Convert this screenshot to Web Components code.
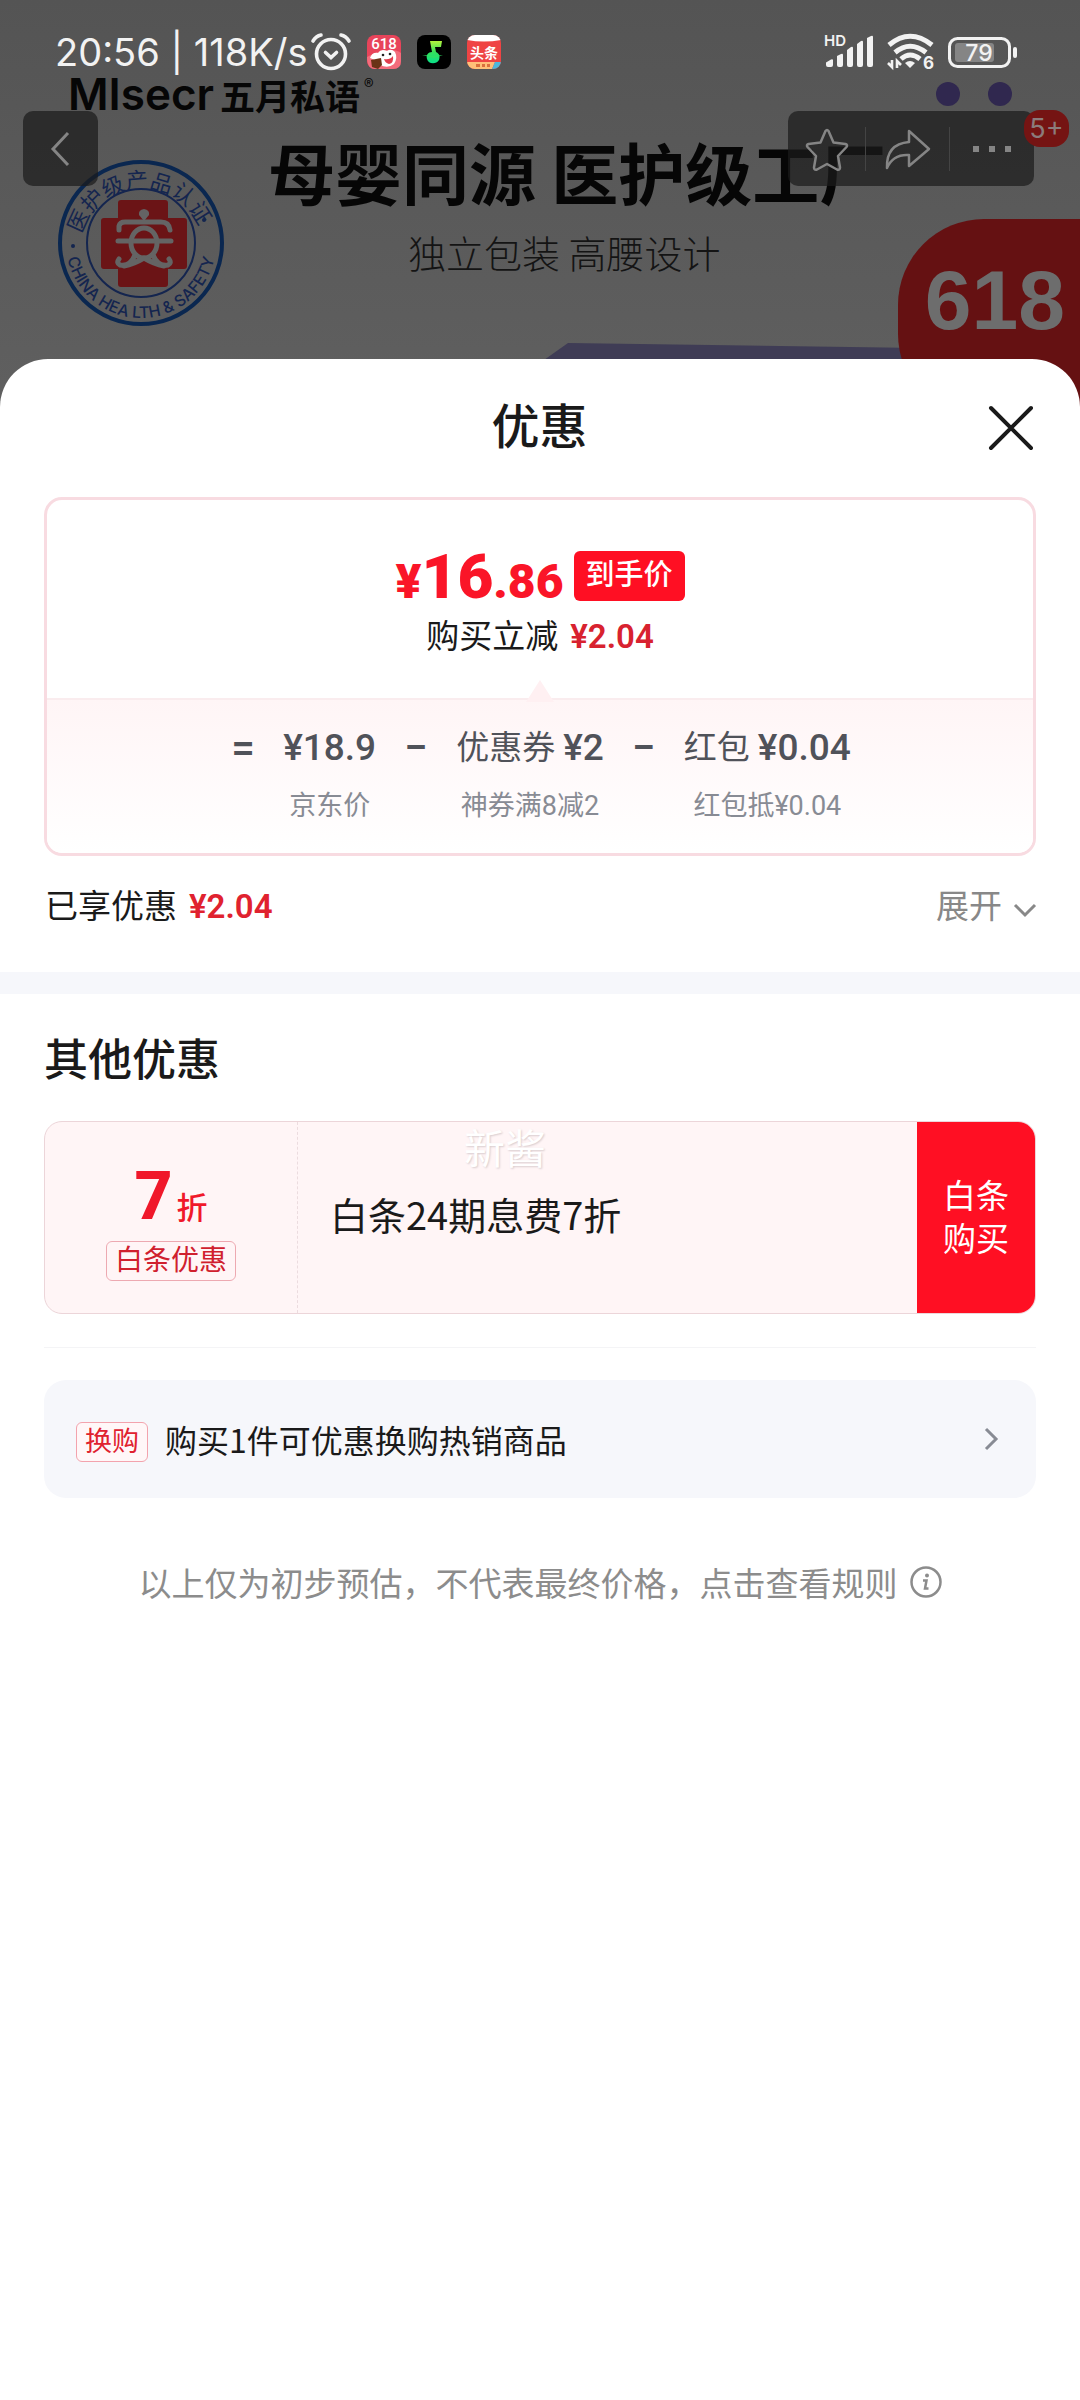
<!DOCTYPE html>
<html lang="zh-CN">
<head>
<meta charset="UTF-8">
<meta name="viewport" content="width=device-width, initial-scale=1">
<title>优惠</title>
<style>
body{
    margin: 0;
    background: #fff;
    color: #1a1a1a;
    font-family: Roboto, "Noto Sans CJK SC", sans-serif;
}
</style>
</head>
<body>
<discount-page></discount-page>

<script>
const base = `
*{ box-sizing: border-box; }
:host{ display: block; }
button{
    margin: 0;
    padding: 0;
    border: 0;
    background: none;
    color: inherit;
    font: inherit;
}
svg{ display: block; flex: none; overflow: visible; }
`

// small helper: every element only fills its open shadow root
class BaseElement extends HTMLElement{
    constructor(){
        super()
        this.attachShadow({mode: 'open'})
    }
    connectedCallback(){
        this.shadowRoot.innerHTML = `<style>${base}${this.css()}</style>${this.html()}`
    }
    css(){ return '' }
    html(){ return '<slot></slot>' }
}

class StatusBar extends BaseElement{
    css(){ return `
:host{
    display: flex;
    align-items: center;
    justify-content: space-between;
    height: 64px;
    padding: 0 62px 0 55px;
    color: #f2f2f2;
    font-family: Inter, Roboto, sans-serif;
}
.side{ display: flex; align-items: center; gap: 16px; }
.left{ font-size: 38px; line-height: 48px; }
.clock{ display: flex; align-items: center; gap: 4px; white-space: nowrap; }
.right{ gap: 13px; }
` }
    html(){ return `
<div class="side left">
    <div class="clock"><span>20:56 | 118K/s</span>
        <svg width="40" height="40" viewBox="0 0 40 40" fill="none" stroke="#f2f2f2" stroke-width="3.6" stroke-linecap="round">
            <circle cx="20" cy="22" r="14.5"/><path d="M2 9Q5 4 10 3M38 9Q35 4 30 3M14.5 20.5l5.500 5 5.500-5"/>
        </svg>
    </div>
    <svg width="34" height="34" viewBox="0 0 34 34">
        <rect width="34" height="34" rx="8" fill="#e8445a"/>
        <path d="M0 22Q0 34 8 34h18q8 0 8-8l0-8Q22 10 0 22z" fill="#f36c7c"/>
        <text x="17" y="14" text-anchor="middle" font-family="Roboto" font-size="15" font-weight="500" fill="#fff">618</text>
        <path d="M3 23q2-6 8-5 3-5 9-2 4-3 8 1 3 6-1 12-6 5-14 1-2-4-10-7z" fill="#fff"/>
        <path d="M17 24q6 1 9-3 1 7-4 8-4-1-5-5z" fill="#e23d4e"/>
        <circle cx="16" cy="20" r="1.3" fill="#222"/><circle cx="23" cy="19" r="1.3" fill="#222"/>
        <path d="M4 25l10-2 1 7-4 4-6-2z" fill="#6b3317"/>
    </svg>
    <svg width="34" height="34" viewBox="0 0 34 34">
        <defs><linearGradient id="note" x1="0" y1="0" x2="0" y2="1"><stop offset="0" stop-color="#b5f23d"/><stop offset=".5" stop-color="#35e05c"/><stop offset="1" stop-color="#0ae089"/></linearGradient></defs>
        <rect width="34" height="34" rx="8" fill="#000"/>
        <path d="M13 6h12l-1 6h-6l1 5c4 2 4 5 3 8-3 5-11 4-12-1-1-4 1-7 5-7z" fill="url(#note)"/>
        <path d="M5 20l12 1 9-1-9 3z" fill="#2fe064"/>
    </svg>
    <svg width="34" height="34" viewBox="0 0 34 34">
        <defs><clipPath id="app"><rect width="34" height="34" rx="8"/></clipPath></defs>
        <g clip-path="url(#app)">
            <path d="M0 0h34v34H0z" fill="#ef4444"/><path d="M0 0h34v5q-17 3-34 0z" fill="#fff"/>
            <path d="M0 27h28l-3 7H0z" fill="#ffc078"/><path d="M28 27h6v7h-9z" fill="#4db8dc"/>
            <path d="M9 29h4v3H9zM15 29h3v3h-3zM20 29h3v3h-3z" fill="#d9703d"/>
        </g>
        <text x="17" y="23" text-anchor="middle" font-family="Noto Sans CJK SC" font-size="14" font-weight="700" fill="#fff">头条</text>
    </svg>
</div>
<div class="side right">
    <svg width="50" height="36" viewBox="0 0 50 36" fill="#f2f2f2">
        <text x="0" y="12" font-family="Inter" font-size="15" font-weight="600">HD</text>
        <path d="M2 28.500l5-3q2-1 2 1V31q0 2-2 2H4q-2 0-2-2zM13 22l4-2q2-1 2 1v10q0 2-2 2h-2q-2 0-2-2zM23 16l4-3q2-1 2 1v17q0 2-2 2h-2q-2 0-2-2zM33 10l4-3q2-1 2 1v23q0 2-2 2h-2q-2 0-2-2zM43 4l4-2q2-1 2 1v28q0 2-2 2h-2q-2 0-2-2z"/>
    </svg>
    <svg width="48" height="36" viewBox="0 0 48 36" fill="none" stroke="#f2f2f2">
        <g stroke-width="5"><path d="M2 11Q23-6.500 45 11"/><path d="M8 18.500Q23 6 39 18.500"/><path d="M14 25Q23 17 33 25"/></g>
        <path d="M18 29q5-4 10 0l-5 5z" fill="#f2f2f2" stroke="none"/>
        <path d="M5 26v7l-4-4M10 34v-7l4 4" stroke-width="2.600"/>
        <text x="36" y="35" font-family="Inter" font-size="17" font-weight="700" fill="#f2f2f2" stroke="none">6</text>
    </svg>
    <svg width="70" height="32" viewBox="0 0 70 32">
        <rect x="1.500" y="2.500" width="60" height="28" rx="8" fill="none" stroke="#f2f2f2" stroke-width="3"/>
        <rect x="7" y="7" width="39" height="19" rx="3" fill="#858585"/>
        <rect x="65" y="11" width="4" height="11" rx="2" fill="#f2f2f2"/>
        <text x="31" y="25" text-anchor="middle" font-family="Inter" font-size="23" font-weight="500" fill="#f2f2f2">79</text>
    </svg>
</div>
` }
}

// round certification stamp on the product photo
class SafetySeal extends BaseElement{
    html(){ return `
<svg width="168" height="168" viewBox="0 0 168 168">
    <circle cx="84" cy="84" r="81" fill="none" stroke="#0a2750" stroke-width="4"/>
    <circle cx="84" cy="84" r="54" fill="none" stroke="#14254f" stroke-width="2"/>
    <path d="M61 44q0-3 3-3h44q3 0 3 3v15h16q3 0 3 3v45q0 3-3 3h-16v15q0 3-3 3H64q-3 0-3-3v-15H47q-3 0-3-3V62q0-3 3-3h14z" fill="#6b1416"/>
    <g fill="none" stroke="#646464" stroke-width="5" stroke-linecap="round" stroke-linejoin="round">
        <path d="M62 71V67q1-4 6-4h36q8 0 9 8M61 82h53"/>
        <ellipse cx="87" cy="84" rx="13" ry="15"/>
        <path d="M78 96q-5 12-15 10-4-2-1-6M96 96q5 12 15 10 4-2 1-6M67 107q10-2 20-8 10 6 20 8"/>
    </g>
    <path d="M87 62l-5-6q-1-5 5-6 6 1 5 6z" fill="#646464"/>
    <defs><path id="top" d="M23 88a61.500 61.500 0 0 1 122-8"/><path id="bottom" d="M9 84a75 75 0 0 0 150 0"/></defs>
    <g fill="#14254f" text-anchor="middle">
        <text font-family="Noto Sans CJK SC" font-size="22"><textPath href="#top" startOffset="50%">医护级产品认证</textPath></text>
        <text font-family="Inter" font-size="16" font-weight="500"><textPath href="#bottom" startOffset="50%">CHINA HEA LTH &amp; SAFETY</textPath></text>
    </g>
    <circle cx="16" cy="87" r="2" fill="#14254f"/><circle cx="147" cy="61" r="2" fill="#14254f"/>
</svg>
` }
}

// dimmed product page behind the sheet
class ProductHero extends BaseElement{
    css(){ return `
:host{
    position: relative;
    height: 420px;
    overflow: hidden;
    background: linear-gradient(#545454, #606060);
    color: #060606;
    font-family: "Noto Sans CJK SC", sans-serif;
}
status-bar{ position: absolute; top: 20px; left: 0; right: 0; z-index: 3; }
.brand{
    position: absolute;
    top: 70px;
    left: 68px;
    display: flex;
    align-items: center;
    height: 48px;
    font-size: 35px;
    font-weight: 700;
}
.brand b{ font: 600 44px/48px Inter, sans-serif; margin-right: 6px; }
.brand sup{ font-size: 20px; line-height: 20px; align-self: flex-start; margin: 6px 0 0 4px; font-weight: 400; }
.slogan{
    position: absolute;
    top: 131px;
    left: 268px;
    white-space: nowrap;
    margin: 0;
    font-size: 67px;
    line-height: 80px;
    font-weight: 700;
}
.sub{
    position: absolute;
    top: 228px;
    left: 408px;
    white-space: nowrap;
    margin: 0;
    font-size: 38px;
    line-height: 48px;
    font-weight: 300;
    color: #141414;
}
safety-seal{ position: absolute; top: 159px; left: 57px; }
.art{ position: absolute; top: 340px; left: 540px; }
.dots{ position: absolute; top: 82px; right: 68px; display: flex; gap: 28px; }
.dots i{ width: 24px; height: 24px; border-radius: 12px; background: #30284f; }
.promo{
    position: absolute;
    top: 219px;
    right: 0;
    width: 182px;
    height: 201px;
    padding: 26px 15px 0 0;
    border-radius: 86px 0 0 86px;
    background: #651112;
    color: #6d6d6d;
    font: 700 84px/110px "Liberation Sans", sans-serif;
    text-align: right;
}
.back, .tools{
    position: absolute;
    top: 111px;
    height: 75px;
    border-radius: 10px;
    background: rgba(28, 28, 28, .72);
    display: flex;
    align-items: center;
}
.back{ left: 23px; width: 75px; justify-content: center; }
.tools{ right: 46px; width: 246px; display: grid; grid-template-columns: 77px 84px 1fr; }
.tools button{ height: 44px; display: flex; align-items: center; justify-content: center; }
.tools button + button{ border-left: 1px solid #444; }
.count{
    position: absolute;
    top: 110px;
    right: 11px;
    width: 45px;
    height: 37px;
    border-radius: 16px;
    background: #751413;
    color: #8b7c7c;
    font: 27px/37px Inter, sans-serif;
    text-align: center;
}
` }
    html(){ return `
<status-bar></status-bar>
<div class="brand"><b>MIsecr</b>五月私语<sup>®</sup></div>
<h2 class="slogan">母婴同源 医护级工厂</h2>
<p class="sub">独立包装 高腰设计</p>
<safety-seal></safety-seal>
<svg class="art" width="400" height="40" viewBox="0 0 400 40"><path d="M4 20L28 3l352 5v32H0z" fill="#3f3c55"/></svg>
<div class="dots"><i></i><i></i></div>
<div class="promo">618</div>
<button class="back" aria-label="返回"><svg width="24" height="36" viewBox="0 0 24 36" fill="none" stroke="#858585" stroke-width="3"><path d="M19 2L4 18l15 16"/></svg></button>
<div class="tools">
    <button aria-label="收藏"><svg width="44" height="44" viewBox="0 0 44 44" fill="none" stroke="#858585" stroke-width="2.500" stroke-linejoin="round"><path d="M20.500 4q1.500-2 3 0l5 11.500 12 1.500q2.500 1 1 3l-8.500 9 2 11.500q0 3-3 2L22 37l-10 5.500q-3 1-3-2L11 29l-8.500-9q-1.500-2 1-3l12-1.500z"/></svg></button>
    <button aria-label="分享"><svg width="46" height="44" viewBox="0 0 46 44" fill="none" stroke="#858585" stroke-width="2.500" stroke-linejoin="round"><path d="M24 4l20 18-20 17V28Q8 27 2 41 1 17 24 15z"/></svg></button>
    <button aria-label="更多"><svg width="40" height="8" viewBox="0 0 40 8" fill="#858585"><path d="M1 1h6v6H1zM17 1h6v6h-6zM33 1h6v6h-6z"/></svg></button>
</div>
<div class="count">5+</div>
` }
}

class SheetHeader extends BaseElement{
    css(){ return `
:host{
    display: grid;
    grid-template-columns: 1fr auto 1fr;
    align-items: center;
    height: 138px;
    padding: 0 46px 0 45px;
}
h1{ grid-column: 2; margin: 0; font-size: 48px; line-height: 64px; font-weight: 500; }
button{ justify-self: end; }
` }
    html(){ return `
<h1><slot></slot></h1>
<button aria-label="关闭"><svg width="46" height="46" viewBox="0 0 46 46" stroke="#1a1a1a" stroke-width="4" stroke-linecap="round"><path d="M3 3l40 40M43 3L3 43"/></svg></button>
` }
}

class PriceCard extends BaseElement{
    css(){ return `
:host{
    margin: 0 44px;
    border: 3px solid #f8dbe1;
    border-radius: 18px;
    overflow: hidden;
}
.final{
    display: flex;
    flex-direction: column;
    align-items: center;
    gap: 4px;
    height: 198px;
    padding-top: 51px;
}
.price{ display: flex; align-items: flex-end; gap: 10px; height: 50px; color: #fa1528; font-weight: 700; }
.price b{ font-size: 48px; line-height: 38px; white-space: nowrap; }
.price big{ font-size: 62px; }
.tag{
    height: 50px;
    padding: 0 12px;
    border-radius: 6px;
    background: #ff0f23;
    color: #fff;
    font-size: 29px;
    line-height: 49px;
    font-weight: 500;
}
.off{ display: flex; align-items: center; gap: 12px; font-size: 33px; line-height: 64px; }
.off b{ color: #d8222f; font-weight: 600; }
.detail{
    position: relative;
    height: 155px;
    border-top: 2px solid #faecee;
    background: linear-gradient(#fff5f6, #fff);
    display: flex;
    justify-content: center;
    gap: 28px;
    padding: 20px 0 0 2px;
}
.caret{ position: absolute; top: -20px; left: calc(50% - 14px); }
` }
    html(){ return `
<div class="final">
    <div class="price"><b>¥<big>16</big>.86</b><span class="tag">到手价</span></div>
    <div class="off">购买立减 <b>¥2.04</b></div>
</div>
<div class="detail">
    <svg class="caret" width="28" height="22" viewBox="0 0 28 22"><path d="M0 22L14 0l14 22z" fill="#fff0f2"/></svg>
    <slot></slot>
</div>
` }
}

class PriceTerm extends BaseElement{
    css(){ return `
:host{ display: flex; gap: 28px; }
.sign{ font-size: 42px; line-height: 56px; color: #505259; font-weight: 500; width: 24px; text-align: center; }
.term{ display: flex; flex-direction: column; align-items: center; gap: 2px; }
.top{ display: flex; gap: 8px; color: #505259; font-size: 33px; line-height: 56px; }
.top b{ font-size: 37px; font-weight: 500; }
.note{ color: #888b94; font-size: 27px; line-height: 56px; }
` }
    html(){
        const label = this.getAttribute("label")
        return `
<span class="sign">${this.getAttribute("sign")}</span>
<div class="term">
    <div class="top">${label ? `<span>${label}</span>` : ''}<b>${this.getAttribute("amount")}</b></div>
    <div class="note"><slot></slot></div>
</div>
` }
}

class SavedRow extends BaseElement{
    css(){ return `
:host{
    display: flex;
    align-items: center;
    justify-content: space-between;
    height: 116px;
    padding: 0 44px 14px 45px;
    font-size: 33px;
    line-height: 48px;
}
div, button{ display: flex; align-items: center; gap: 12px; }
b{ color: #e0222f; font-weight: 600; }
button{ color: #888; }
svg{ margin-top: 6px; }
` }
    html(){ return `
<div><slot></slot><b>${this.getAttribute("amount")}</b></div>
<button>展开<svg width="22" height="14" viewBox="0 0 22 14" fill="none" stroke="#888" stroke-width="3"><path d="M1 2l10 10L21 2"/></svg></button>
` }
}

class CouponCard extends BaseElement{
    css(){ return `
:host{
    position: relative;
    display: flex;
    height: 193px;
    margin: 0 44px;
    border: 1px solid #ecd5d9;
    border-radius: 18px;
    background: #fff5f6;
    overflow: hidden;
}
.rate{
    width: 253px;
    display: flex;
    flex-direction: column;
    align-items: center;
    padding-top: 41px;
    border-right: 1px dashed #ecdcdf;
    color: #f0182a;
}
.num{ display: flex; align-items: baseline; gap: 4px; font-size: 31px; font-weight: 500; line-height: 68px; height: 78px; }
.num b{ font-size: 66px; font-weight: 800; }
.tag{
    height: 40px;
    padding: 0 8px;
    border: 1px solid #eda9b1;
    border-radius: 6px;
    color: #d0202e;
    font-size: 28px;
    line-height: 37px;
}
.name{
    flex: 1;
    display: flex;
    align-items: center;
    padding: 0 0 8px 32px;
    font-family: "Noto Sans CJK SC", sans-serif;
    font-size: 38px;
}
.buy{ width: 118px; background: #ff0f23; color: #fff; font-size: 33px; line-height: 43px; padding: 0 25px; }
.float{
    position: absolute;
    top: 0;
    left: 419px;
    color: #fff;
    font-size: 41px;
    line-height: 56px;
    text-shadow: 1px 1px 2px #d9cdcf;
}
` }
    html(){ return `
<div class="rate">
    <div class="num"><b>7</b>折</div>
    <span class="tag">白条优惠</span>
</div>
<div class="name"><slot></slot></div>
<button class="buy">白条购买</button>
<span class="float">新酱</span>
` }
}

class SwapBar extends BaseElement{
    css(){ return `
:host{ margin: 0 44px; }
button{
    display: flex;
    align-items: center;
    gap: 17px;
    width: 100%;
    height: 118px;
    padding: 0 38px 0 32px;
    border-radius: 22px;
    background: #f6f7fb;
    font-size: 32px;
    text-align: left;
}
.tag{
    height: 40px;
    margin-top: 6px;
    padding: 0 8px;
    border: 1px solid #f3a3ad;
    border-radius: 6px;
    background: #fff7f8;
    color: #e0222f;
    font-size: 27px;
    line-height: 38px;
}
.text{ flex: 1; font-family: "Noto Sans CJK SC", sans-serif; }
` }
    html(){ return `
<button>
    <span class="tag">换购</span>
    <span class="text"><slot></slot></span>
    <svg width="14" height="24" viewBox="0 0 14 24" fill="none" stroke="#888b94" stroke-width="3"><path d="M2 2l10 10L2 22"/></svg>
</button>
` }
}

class RuleNote extends BaseElement{
    css(){ return `
a{
    display: flex;
    align-items: center;
    justify-content: center;
    gap: 12px;
    padding-top: 60px;
    color: #8c8c8c;
    font-family: "Noto Sans CJK SC", sans-serif;
    font-size: 33px;
    line-height: 48px;
    text-decoration: none;
}
` }
    html(){ return `
<a href="#rules"><slot></slot>
    <svg width="32" height="32" viewBox="0 0 32 32" fill="none" stroke="#8c8c8c" stroke-width="2.500"><circle cx="16" cy="16" r="14.500"/><circle cx="17" cy="9.500" r="2" fill="#8c8c8c" stroke="none"/><path d="M13 14.500h3.500L15 22.500h3.500"/></svg>
</a>
` }
}

class DiscountPage extends BaseElement{
    css(){ return `
main{
    position: relative;
    margin-top: -61px;
    border-radius: 48px 48px 0 0;
    background: #fff;
}
.band{ height: 22px; background: #f6f7fb; }
h2{ margin: 0; padding: 35px 44px 28px; font-size: 44px; line-height: 64px; font-weight: 500; }
hr{ margin: 33px 44px 32px; border: 0; border-top: 1px solid #f4f4f6; }
` }
    html(){ return `
<product-hero></product-hero>
<main>
    <sheet-header>优惠</sheet-header>
    <price-card>
        <price-term sign="=" amount="¥18.9">京东价</price-term>
        <price-term sign="−" label="优惠券" amount="¥2">神券满8减2</price-term>
        <price-term sign="−" label="红包" amount="¥0.04">红包抵¥0.04</price-term>
    </price-card>
    <saved-row amount="¥2.04">已享优惠</saved-row>
    <div class="band"></div>
    <h2>其他优惠</h2>
    <coupon-card>白条24期息费7折</coupon-card>
    <hr>
    <swap-bar>购买1件可优惠换购热销商品</swap-bar>
    <rule-note>以上仅为初步预估，不代表最终价格，点击查看规则</rule-note>
</main>
` }
}

customElements.define("status-bar", StatusBar)
customElements.define("safety-seal", SafetySeal)
customElements.define("product-hero", ProductHero)
customElements.define("sheet-header", SheetHeader)
customElements.define("price-card", PriceCard)
customElements.define("price-term", PriceTerm)
customElements.define("saved-row", SavedRow)
customElements.define("coupon-card", CouponCard)
customElements.define("swap-bar", SwapBar)
customElements.define("rule-note", RuleNote)
customElements.define("discount-page", DiscountPage)
</script>
</body>
</html>
